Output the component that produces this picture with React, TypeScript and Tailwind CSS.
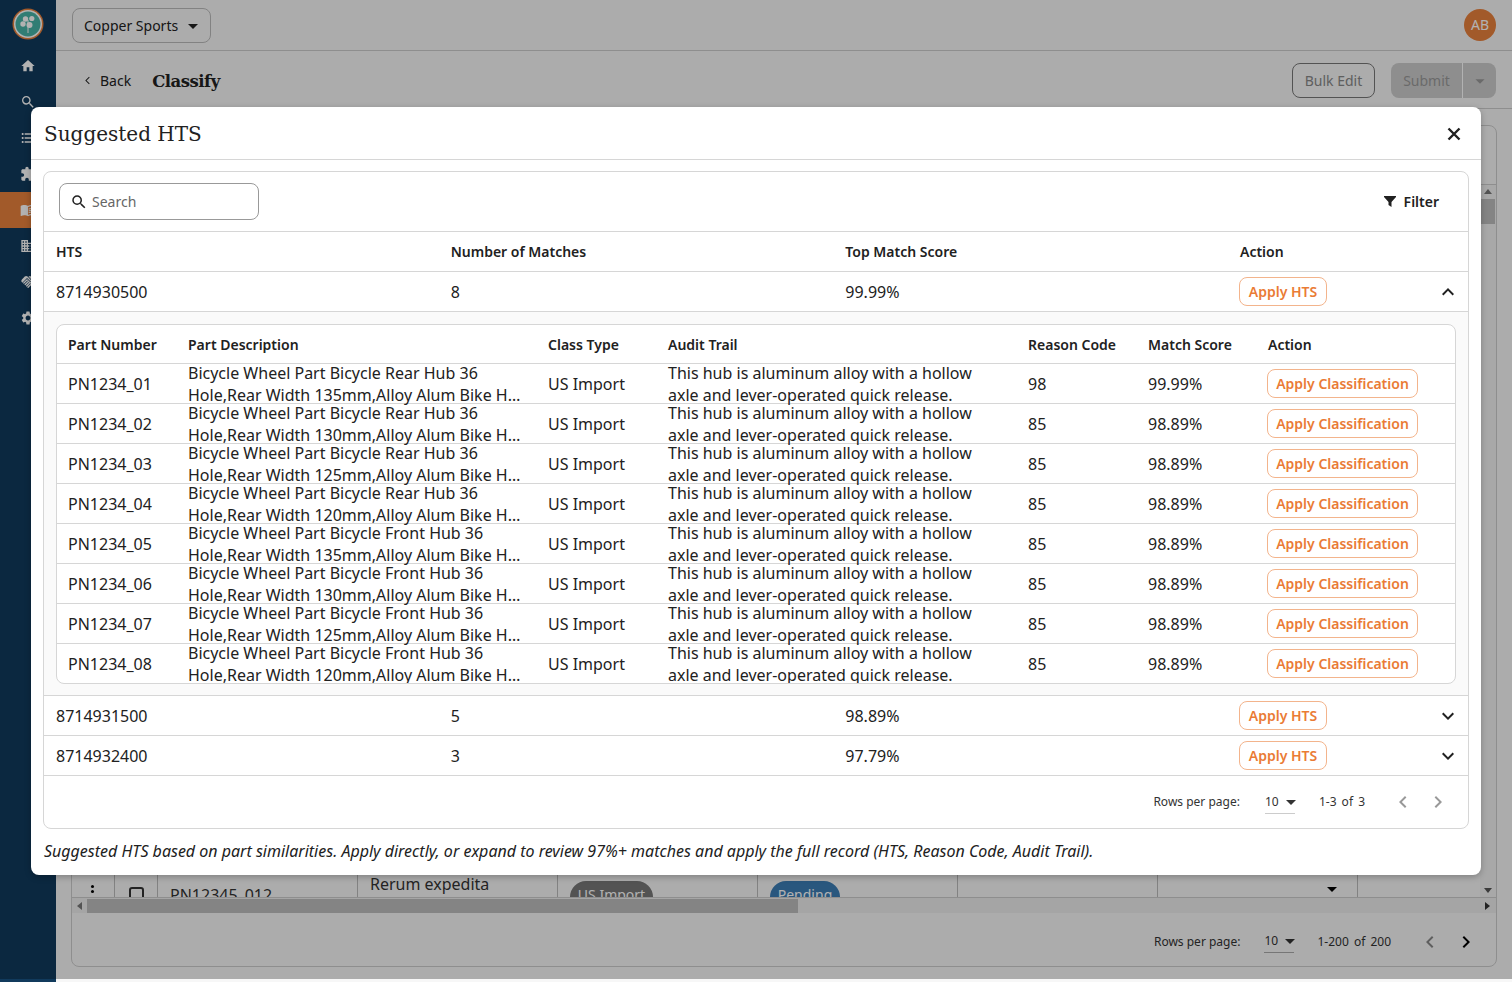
import React from 'react';
import {
  MdHome,
  MdSearch,
  MdFormatListBulleted,
  MdExtension,
  MdMenuBook,
  MdDomain,
  MdHandshake,
  MdSettings,
  MdArrowDropDown,
  MdExpandLess,
  MdExpandMore,
  MdChevronLeft,
  MdChevronRight,
  MdArrowBackIosNew,
} from 'react-icons/md';

const parts = [
  { pn: 'PN1234_01', l1: 'Rear', w: '135mm', code: '98', score: '99.99%' },
  { pn: 'PN1234_02', l1: 'Rear', w: '130mm', code: '85', score: '98.89%' },
  { pn: 'PN1234_03', l1: 'Rear', w: '125mm', code: '85', score: '98.89%' },
  { pn: 'PN1234_04', l1: 'Rear', w: '120mm', code: '85', score: '98.89%' },
  { pn: 'PN1234_05', l1: 'Front', w: '135mm', code: '85', score: '98.89%' },
  { pn: 'PN1234_06', l1: 'Front', w: '130mm', code: '85', score: '98.89%' },
  { pn: 'PN1234_07', l1: 'Front', w: '125mm', code: '85', score: '98.89%' },
  { pn: 'PN1234_08', l1: 'Front', w: '120mm', code: '85', score: '98.89%' },
];

const navIcons = [MdHome, MdSearch, MdFormatListBulleted, MdExtension, MdMenuBook, MdDomain, MdHandshake, MdSettings];

const outerCols = 'grid grid-cols-[394.67px_394.67px_394.67px_1fr] grid-rows-[39px] items-center';
const innerCols = 'grid grid-cols-[120px_360px_120px_360px_120px_120px_1fr] grid-rows-[39px] items-center';
const orangeBtn =
  'flex items-center justify-center rounded-lg border border-[#f3b48c] text-sm font-semibold text-[#ea7b35] bg-white';

const Logo = () => (
  <svg width="32" height="32" viewBox="0 0 32 32">
    <circle cx="16" cy="16" r="15.5" fill="#e9813d" />
    <circle cx="16" cy="16" r="14" fill="#fff" />
    <circle cx="16" cy="16" r="12.5" fill="#47b3a6" />
    <path d="M16 12v13" stroke="#fff" strokeWidth="1" />
    <circle cx="13.5" cy="11" r="2.7" fill="#fff" />
    <circle cx="19.8" cy="10.5" r="2.6" fill="#fff" />
    <circle cx="11" cy="16" r="2.7" fill="#fff" />
    <circle cx="17.5" cy="17" r="3" fill="#fff" />
  </svg>
);

const HtsRow: React.FC<{ hts: string; n: string; score: string; open?: boolean }> = ({ hts, n, score, open }) => (
  <div className={`${outerCols} h-10 border-b border-[#d6d6d6] pl-3 text-base text-[#212121]`}>
    <div>{hts}</div>
    <div>{n}</div>
    <div>{score}</div>
    <div className="flex items-center justify-between pr-2">
      <button className={`${orangeBtn} -ml-[1px] h-[29px] w-[88px]`}>Apply HTS</button>
      {open ? <MdExpandLess size={24} /> : <MdExpandMore size={24} />}
    </div>
  </div>
);

const BgRow = () => (
  <div className="flex h-[23px] overflow-hidden text-base text-[#333]">
    <div className="flex w-[43px] shrink-0 justify-center border-r border-[#bbb] pr-[1px] pt-[11px]">
      <div className="flex flex-col gap-[2px]">
        <div className="size-[3px] rounded-full bg-black" />
        <div className="size-[3px] rounded-full bg-black" />
      </div>
    </div>
    <div className="flex w-[43px] shrink-0 justify-center border-r border-[#bbb] pt-[13px]">
      <div className="size-[15px] shrink-0 rounded-[3px] border-2 border-[#333]" />
    </div>
    <div className="w-[200px] shrink-0 border-r border-[#bbb] pl-[12px] pt-[9px]">PN12345_012</div>
    <div className="w-[200px] shrink-0 border-r border-[#bbb] pl-[12px] leading-[20px]">Rerum expedita</div>
    <div className="w-[200px] shrink-0 border-r border-[#bbb] pl-[12px] pt-[7px]">
      <div className="flex h-[32px] w-[83px] justify-center rounded-2xl bg-[#777] pt-[4px] text-sm text-white">US Import</div>
    </div>
    <div className="w-[200px] shrink-0 border-r border-[#bbb] pl-[12px] pt-[7px]">
      <div className="flex h-[32px] w-[70px] justify-center rounded-2xl bg-[#3c7db5] pt-[4px] text-sm text-white">Pending</div>
    </div>
    <div className="w-[200px] shrink-0 border-r border-[#bbb]" />
    <div className="flex w-[200px] shrink-0 justify-end border-r border-[#bbb] pr-[13px] pt-[3px]">
      <MdArrowDropDown size={24} className="text-black" />
    </div>
  </div>
);

const App: React.FC = () => {
  return (
    <div className="relative flex h-[982px] w-[1512px] overflow-hidden bg-[#f7f7f7] font-['Noto_Sans',sans-serif] text-[#212121]">
      {/* page under the dialog */}
      <aside className="flex w-14 shrink-0 flex-col items-center bg-[#113a5c]">
        <div className="flex h-12 items-center justify-center"><Logo /></div>
        <div className="flex w-full flex-col">
          {navIcons.map((Icon, i) => (
            <div
              key={i}
              className={`flex h-9 w-full items-center justify-center text-white ${i === 4 ? 'bg-[#e9813d]' : ''}`}
            >
              <Icon size={16} />
            </div>
          ))}
        </div>
      </aside>
      <main className="flex min-h-0 min-w-0 flex-1 flex-col">
        <header className="flex h-[51px] shrink-0 items-center justify-between border-b border-[#ccc] pl-4 pr-4">
          <button className="flex h-[35px] w-[139px] items-center justify-between whitespace-nowrap rounded-lg border border-[#bbb] pl-[11px] pr-[5px] pt-[1px] text-sm">
            Copper Sports
            <MdArrowDropDown size={24} />
          </button>
          <div className="flex size-8 items-center justify-center rounded-full bg-[#e9813d] text-sm text-white">AB</div>
        </header>
        <div className="flex h-[58px] shrink-0 items-center justify-between border-b border-[#ccc] pl-[27px] pr-4 pt-[2px]">
          <div className="flex items-center">
            <MdArrowBackIosNew size={9} />
            <span className="ml-2 text-sm">Back</span>
            <span className="ml-[21px] pt-[3px] font-['DejaVu_Serif',serif] text-[16.5px] font-bold tracking-[-0.5px]">Classify</span>
          </div>
          <div className="flex items-center gap-4">
            <button className="h-[35px] w-[83px] rounded-lg border border-[#777] text-sm text-[#888]">Bulk Edit</button>
            <div className="flex h-[35px] w-[105px] overflow-hidden rounded-lg bg-[#ccc] text-sm text-[#999]">
              <div className="flex w-[72px] items-center justify-center border-r border-white">Submit</div>
              <div className="flex flex-1 items-center justify-center"><MdArrowDropDown size={22} /></div>
            </div>
          </div>
        </div>
        <div className="flex min-h-0 flex-1 flex-col px-[15px] pb-[15px] pt-4">
          <div className="flex min-h-0 flex-1 flex-col overflow-hidden rounded-lg border border-[#ccc]">
            <div className="h-[59px] shrink-0 border-b border-[#ccc]" />
            <div className="flex min-h-0 flex-1 overflow-hidden">
              <div className="min-w-0 flex-1 overflow-hidden">
                <div className="h-[689px]" />
                <BgRow />
              </div>
              <div className="flex w-4 shrink-0 flex-col items-center bg-[#f1f1f1] text-[8px] text-[#555]">
                <div className="mt-[4px] h-0 w-0 border-x-[4px] border-b-[5px] border-x-transparent border-b-[#777]" />
                <div className="mt-[5px] h-[25px] w-[14px] bg-[#bdbdbd]" />
                <div className="mb-[4px] mt-auto h-0 w-0 border-x-[4px] border-t-[5px] border-x-transparent border-t-[#555]" />
              </div>
            </div>
            <div className="flex h-4 shrink-0 items-center border-t border-[#ccc] bg-[#ededed]">
              <div className="ml-[5px] h-0 w-0 border-y-[4px] border-r-[5px] border-y-transparent border-r-[#777]" />
              <div className="ml-[5px] h-[14px] w-[711px] bg-[#bdbdbd]" />
              <div className="ml-auto mr-[6px] h-0 w-0 border-y-[4px] border-l-[5px] border-y-transparent border-l-[#333]" />
            </div>
            <div className="flex h-[53px] shrink-0 items-center justify-end pr-[18px] pt-[4px] text-xs text-[#333]">
              <span>Rows per page:</span>
              <span className="ml-6 flex h-[23px] w-[30px] items-center justify-between border-b border-[#aaa]">
                10<MdArrowDropDown size={24} className="-mr-[8px]" />
              </span>
              <span className="ml-[23px] [word-spacing:2px]">1-200 of 200</span>
              <MdChevronLeft size={24} className="ml-[27px] text-[#888]" />
              <MdChevronRight size={24} className="ml-3 text-black" />
            </div>
          </div>
        </div>
      </main>

      {/* scrim */}
      <div className="absolute inset-x-0 top-0 h-[979px] bg-black/30" />

      {/* dialog */}
      <div className="absolute left-[31px] top-[107px] flex h-[768px] w-[1450px] flex-col rounded-lg bg-white shadow-[0_2px_6px_rgba(0,0,0,0.25)]">
        <div className="flex h-[53px] shrink-0 items-center justify-between border-b border-[#d6d6d6] pl-[13px] pr-[20px] pt-[2px]">
          <h2 className="font-['DejaVu_Serif',serif] text-xl font-normal">Suggested HTS</h2>
          <svg width="14" height="14" viewBox="0 0 14 14" stroke="currentColor" strokeWidth="2.4" fill="none">
            <path d="M1.5 1.5l11 11M12.5 1.5l-11 11" />
          </svg>
        </div>
        <div className="px-3 pt-[11px]">
          <div className="h-[658px] overflow-hidden rounded-lg border border-[#d6d6d6]">
            <div className="flex h-[60px] items-center justify-between border-b border-[#d6d6d6] pl-[15px] pr-[29px]">
              <div className="flex h-[37px] w-[200px] items-center gap-1 rounded-lg border border-[#999] pl-[10px] text-sm text-[#666]">
                <MdSearch size={18} className="text-[#212121]" />
                Search
              </div>
              <div className="flex items-center gap-2 text-sm font-semibold">
                <svg width="12" height="11" viewBox="0 0 12 11" fill="currentColor">
                  <path d="M0 0h12v1L7.5 6v5L4.5 9V6L0 1z" />
                </svg>
                Filter
              </div>
            </div>
            <div className={`${outerCols} h-10 border-b border-[#d6d6d6] pl-3 text-sm font-semibold`}>
              <div>HTS</div>
              <div>Number of Matches</div>
              <div>Top Match Score</div>
              <div>Action</div>
            </div>
            <HtsRow hts="8714930500" n="8" score="99.99%" open />
            <div className="border-b border-[#d6d6d6] bg-[#fafafa] px-3 pb-[11px] pt-3">
              <div className="overflow-hidden rounded-lg border border-[#d6d6d6] bg-white">
                <div className={`${innerCols} h-[38px] pl-[11px] text-sm font-semibold`}>
                  <div>Part Number</div>
                  <div>Part Description</div>
                  <div>Class Type</div>
                  <div>Audit Trail</div>
                  <div>Reason Code</div>
                  <div>Match Score</div>
                  <div>Action</div>
                </div>
                {parts.map((p) => (
                  <div key={p.pn} className={`${innerCols} h-10 border-t border-[#d6d6d6] pl-[11px] text-base`}>
                    <div>{p.pn}</div>
                    <div className="pr-5 leading-[22px]">
                      <div className="line-clamp-2">
                        Bicycle Wheel Part Bicycle {p.l1} Hub 36 Hole,Rear Width {p.w},Alloy Alum Bike Hub Replacement Part
                      </div>
                    </div>
                    <div>US Import</div>
                    <div className="pr-6 leading-[22px]">
                      This hub is aluminum alloy with a hollow axle and lever-operated quick release.
                    </div>
                    <div>{p.code}</div>
                    <div>{p.score}</div>
                    <div>
                      <button className={`${orangeBtn} -ml-[1px] h-[29px] w-[151px]`}>Apply Classification</button>
                    </div>
                  </div>
                ))}
              </div>
            </div>
            <HtsRow hts="8714931500" n="5" score="98.89%" />
            <HtsRow hts="8714932400" n="3" score="97.79%" />
            <div className="flex h-[52px] items-center justify-end pr-[18px] text-xs text-[#333]">
              <span>Rows per page:</span>
              <span className="ml-[25px] flex h-[23px] w-[30px] items-center justify-between border-b border-[#ccc]">
                10<MdArrowDropDown size={24} className="-mr-[8px]" />
              </span>
              <span className="ml-6 [word-spacing:2px]">1-3 of 3</span>
              <MdChevronLeft size={24} className="ml-[26px] text-[#999]" />
              <MdChevronRight size={24} className="ml-[11px] text-[#999]" />
            </div>
          </div>
        </div>
        <p className="pl-[13px] pt-[10px] text-base italic">
          Suggested HTS based on part similarities. Apply directly, or expand to review 97%+ matches and apply the full record (HTS, Reason Code, Audit Trail).
        </p>
      </div>
    </div>
  );
};

export default App;
